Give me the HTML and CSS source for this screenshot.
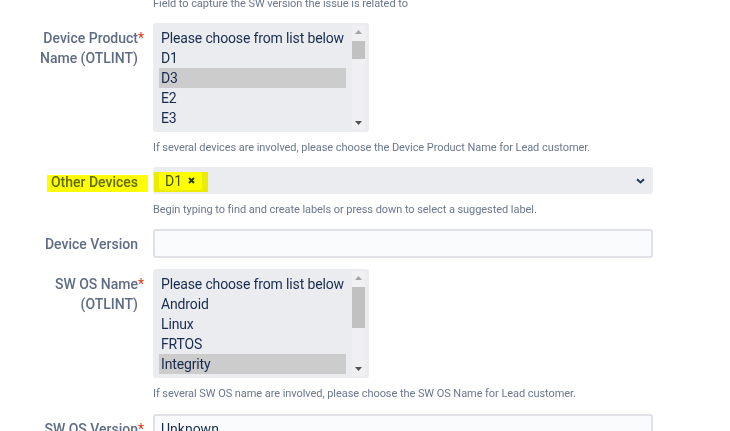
FILE: index.html
```html
<!DOCTYPE html>
<html>
<head>
<meta charset="utf-8">
<link rel="stylesheet" href="styles.css">
</head>
<body>
<div class="form">
  <div class="row">
    <div class="label"></div>
    <div class="field"><div class="desc first">Field to capture the SW version the issue is related to</div></div>
  </div>

  <div class="row">
    <div class="label">Device Product<span class="req">*</span><br>Name (OTLINT)</div>
    <div class="field">
      <div class="listbox">
        <div class="options">
          <div class="opt">Please choose from list below</div>
          <div class="opt">D1</div>
          <div class="opt sel">D3</div>
          <div class="opt">E2</div>
          <div class="opt">E3</div>
        </div>
        <div class="scrollbar">
          <div class="arrow up"><svg width="7" height="4" viewBox="0 0 7 4"><polygon points="0,4 3.5,0 7,4" fill="#a3a3a3"/></svg></div>
          <div class="track"><div class="thumb short"></div></div>
          <div class="arrow down"><svg width="7" height="4" viewBox="0 0 7 4"><polygon points="0,0 3.5,4 7,0" fill="#505050"/></svg></div>
        </div>
      </div>
      <div class="desc">If several devices are involved, please choose the Device Product Name for Lead customer.</div>
    </div>
  </div>

  <div class="row hl-row">
    <div class="label">Other Devices</div>
    <div class="field">
      <div class="picker">
        <span class="tag">D1 <svg class="x" width="7" height="7" viewBox="0 0 7 7"><path d="M1 1L6 6M6 1L1 6" stroke="#253858" stroke-width="1.8"/></svg></span>
        <svg class="chev" width="9" height="6" viewBox="0 0 9 6"><path d="M1 1.2L4.5 4.5L8 1.2" fill="none" stroke="#253858" stroke-width="2"/></svg>
      </div>
      <div class="desc">Begin typing to find and create labels or press down to select a suggested label.</div>
    </div>
    <span class="hl hl-label"></span>
    <span class="hl hl-tag"></span>
  </div>

  <div class="row">
    <div class="label">Device Version</div>
    <div class="field"><div class="input"></div></div>
  </div>

  <div class="row">
    <div class="label">SW OS Name<span class="req">*</span><br>(OTLINT)</div>
    <div class="field">
      <div class="listbox">
        <div class="options">
          <div class="opt">Please choose from list below</div>
          <div class="opt">Android</div>
          <div class="opt">Linux</div>
          <div class="opt">FRTOS</div>
          <div class="opt sel">Integrity</div>
        </div>
        <div class="scrollbar">
          <div class="arrow up"><svg width="7" height="4" viewBox="0 0 7 4"><polygon points="0,4 3.5,0 7,4" fill="#a3a3a3"/></svg></div>
          <div class="track"><div class="thumb long"></div></div>
          <div class="arrow down"><svg width="7" height="4" viewBox="0 0 7 4"><polygon points="0,0 3.5,4 7,0" fill="#505050"/></svg></div>
        </div>
      </div>
      <div class="desc">If several SW OS name are involved, please choose the SW OS Name for Lead customer.</div>
    </div>
  </div>

  <div class="row last">
    <div class="label">SW OS Version<span class="req">*</span></div>
    <div class="field"><div class="input filled">Unknown</div></div>
  </div>
</div>
</body>
</html>
```

FILE: styles.css
```css
html, body {
  margin: 0;
  padding: 0;
  background: #ffffff;
  overflow: hidden;
}
body {
  font-family: Roboto, "Noto Sans", sans-serif;
  color: #172b4d;
  width: 730px;
  height: 431px;
}
.form {
  margin-top: -4px;
  display: flex;
  flex-direction: column;
  gap: 11px;
}
.row {
  position: relative;
  display: grid;
  grid-template-columns: 138px 1fr;
  column-gap: 15px;
}
.row.last {
  margin-top: 1px;
}
.label {
  text-align: right;
  font-size: 14px;
  font-weight: 500;
  line-height: 20px;
  padding-top: 5px;
  color: #5e6c84;
  white-space: nowrap;
}
.req {
  display: inline-block;
  width: 0;
  color: #de350b;
  font-weight: 400;
  overflow: visible;
}
.field {
  display: flex;
  flex-direction: column;
  align-items: flex-start;
}
.desc {
  font-size: 11px;
  line-height: 16px;
  letter-spacing: -0.06px;
  color: #6b778c;
  margin-top: 8px;
  white-space: nowrap;
}
.desc.first {
  margin-top: 0;
}
.listbox {
  width: 216px;
  height: 109px;
  box-sizing: border-box;
  background: #ebecf0;
  border-radius: 3px;
  padding: 2px 4px 2px 6px;
  display: flex;
  gap: 6px;
}
.options {
  flex: 1;
  margin-top: 3px;
  overflow: hidden;
}
.opt {
  height: 20px;
  line-height: 20px;
  font-size: 14px;
  letter-spacing: -0.14px;
  padding-left: 2px;
  color: #172b4d;
  white-space: nowrap;
}
.opt.sel {
  background: #cccccc;
}
.scrollbar {
  width: 13px;
  display: flex;
  flex-direction: column;
  background: #f0f0f2;
}
.arrow {
  height: 14px;
  display: flex;
  align-items: center;
  justify-content: center;
}
.track {
  flex: 1;
  padding-top: 2px;
}
.thumb {
  background: #c1c1c1;
}
.thumb.short { height: 18px; }
.thumb.long { height: 41px; }
.picker {
  width: 500px;
  height: 27px;
  box-sizing: border-box;
  background: #ebecf0;
  border-radius: 3px;
  display: flex;
  align-items: center;
  justify-content: space-between;
  padding: 0 8px 0 6px;
}
.tag {
  background: #ffffff;
  border-radius: 3px;
  height: 18px;
  width: 43px;
  box-sizing: border-box;
  padding-left: 6px;
  display: flex;
  align-items: center;
  gap: 6px;
  font-size: 14px;
  color: #42526e;
}
.input {
  width: 500px;
  height: 29px;
  box-sizing: border-box;
  border: 2px solid #dfe1e6;
  background: #fafbfc;
  border-radius: 3px;
  font-size: 14px;
  line-height: 25px;
  padding-left: 6px;
  color: #172b4d;
}
.input.filled {
  padding-top: 2px;
  line-height: 23px;
}
.hl {
  position: absolute;
  background: #ffff00;
  mix-blend-mode: multiply;
}
.hl-label {
  left: 47px;
  top: 8px;
  width: 101px;
  height: 17px;
}
.hl-tag {
  left: 154px;
  top: 5px;
  width: 54px;
  height: 20px;
}
```
